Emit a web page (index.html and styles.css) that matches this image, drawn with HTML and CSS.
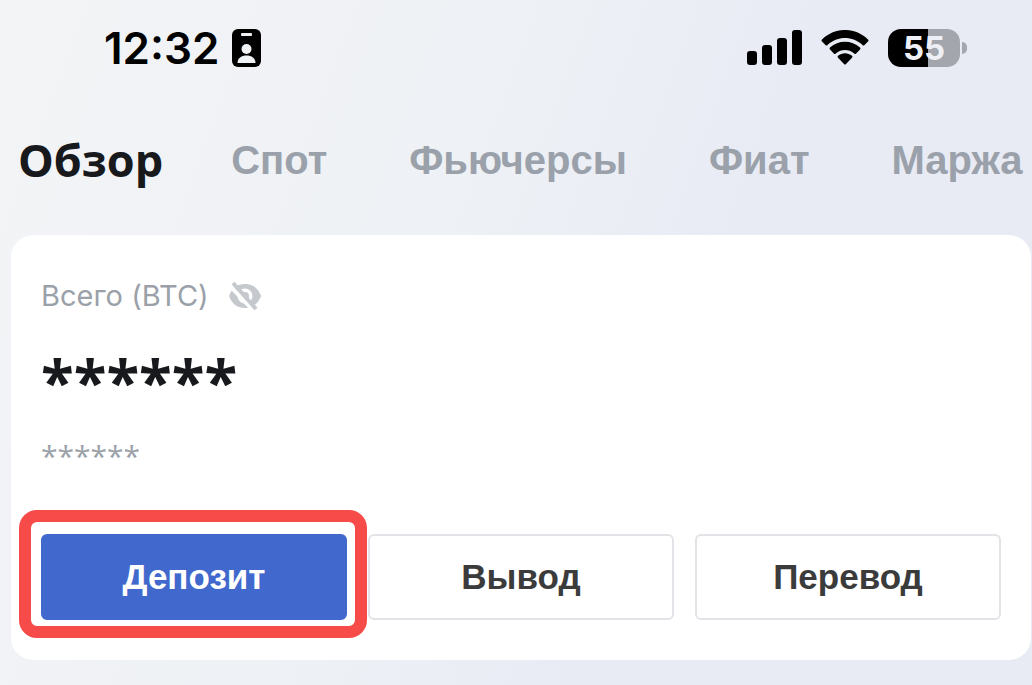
FILE: index.html
```
<!DOCTYPE html>
<html lang="ru">
<head>
  <meta charset="UTF-8">
  <meta name="viewport" content="width=device-width, initial-scale=1.0">
  <title>Обзор</title>
  <link rel="stylesheet" href="styles.css">
</head>
<body>
  <header class="status-bar">
    <div class="status-left">
      <span class="clock">12:32</span>
      <svg class="badge-icon" width="29" height="38" viewBox="0 0 29 38">
        <rect width="29" height="38" rx="6" fill="#000"/>
        <rect x="9" y="4" width="11" height="3" rx="1" fill="#eff2f5"/>
        <circle cx="14.5" cy="20" r="5" fill="#eff2f5"/>
        <path d="M5.500 34c0-5 4-7.500 9-7.500s9 2.500 9 7.500z" fill="#eff2f5"/>
      </svg>
    </div>
    <div class="status-right">
      <svg width="55" height="36" viewBox="0 0 55 36">
        <rect x="0" y="21" width="10" height="14" rx="3"/>
        <rect x="15" y="15" width="10" height="20" rx="3"/>
        <rect x="30" y="8" width="10" height="27" rx="3"/>
        <rect x="45" y="0" width="10" height="35" rx="3"/>
      </svg>
      <svg width="48" height="36" viewBox="0 0 48 36">
        <path d="M1 9.500C14-3.200 34-3.200 47 9.500q1 1 0 2L43.500 15q-1 1-2 0C31.500 5.800 16.500 5.800 6.500 15q-1 1-2 0L1 11.500q-1-1 0-2z"/>
        <path d="M9 17.600c8.400-7.900 21.600-7.900 30 0q1 1 0 2L35.200 23.400q-1 1-2 0c-5.300-4.600-13.100-4.600-18.400 0q-1 1-2 0L9 19.600q-1-1 0-2z"/>
        <path d="M17 25.800c4-3.500 10-3.500 14 0q1 1 0 2L25 34q-1 1-2 0L17 27.800q-1-1 0-2z"/>
      </svg>
      <div class="battery">
        <span class="battery-level">55</span>
        <span class="battery-tip"></span>
      </div>
    </div>
  </header>

  <nav class="tabs">
    <a class="tab active" href="#overview">Обзор</a>
    <a class="tab" href="#spot">Спот</a>
    <a class="tab" href="#futures">Фьючерсы</a>
    <a class="tab" href="#fiat">Фиат</a>
    <a class="tab" href="#margin">Маржа</a>
  </nav>

  <main class="card">
    <div class="total">
      <span>Всего (BTC)</span>
      <button class="toggle" type="button" aria-label="Показать баланс">
        <svg width="32" height="30" viewBox="0 0 32 30">
          <path d="M0 15C3 6.500 9 3 16 3s13 3.500 16 12C29 23.500 23 27 16 27S3 23.500 0 15z" fill="#c5c9ce"/>
          <circle cx="16" cy="15" r="7.500" fill="#fff"/>
          <circle cx="16" cy="15" r="4" fill="#c5c9ce"/>
          <path d="M1 5L24 29" stroke="#fff" stroke-width="4"/>
          <path d="M4 2L27 28" stroke="#c5c9ce" stroke-width="4"/>
        </svg>
      </button>
    </div>
    <div class="balance">******</div>
    <div class="balance-fiat">******</div>
    <div class="actions">
      <div class="action highlighted">
        <button class="btn primary" type="button">Депозит</button>
      </div>
      <div class="action">
        <button class="btn" type="button">Вывод</button>
      </div>
      <div class="action">
        <button class="btn" type="button">Перевод</button>
      </div>
    </div>
  </main>
</body>
</html>
```
FILE: styles.css
```
* {
  box-sizing: border-box;
}

body {
  margin: 0;
  min-height: 100vh;
  font-family: "Liberation Sans", Arial, sans-serif;
  background: linear-gradient(110deg, #f3f4f6 0%, #eef1f5 40%, #e8ebf4 65%, #e8ebf4 100%);
  overflow-x: hidden;
}

.status-bar {
  display: flex;
  justify-content: space-between;
  align-items: center;
  height: 96px;
  padding: 0 65px 0 104px;
}

.status-left {
  display: flex;
  align-items: center;
  gap: 13px;
}

.clock {
  font-family: Inter, sans-serif;
  font-size: 44px;
  font-weight: 600;
}

.status-right {
  display: flex;
  align-items: center;
  gap: 19px;
}

.battery {
  position: relative;
  width: 72px;
  height: 38px;
  margin-right: 7px;
  border-radius: 13px;
  background: linear-gradient(90deg, #000 55%, #a3a6ad 55%);
  text-align: center;
}

.battery-level {
  color: #eef0f6;
  font-family: Inter, sans-serif;
  font-size: 33px;
  font-weight: 700;
  line-height: 38px;
}

.battery-tip {
  position: absolute;
  top: 13px;
  right: -7px;
  width: 5px;
  height: 12px;
  border-radius: 0 6px 6px 0;
  background: #a3a6ad;
}

.tabs {
  display: flex;
  align-items: flex-start;
  gap: 82px;
  height: 139px;
  margin-right: 8px;
  padding: 36px 0 0 18px;
  overflow: hidden;
}

.tab {
  color: #9aa1aa;
  font-size: 40px;
  font-weight: 700;
  line-height: 56px;
  text-decoration: none;
}

.tab.active {
  margin-right: -14px;
  color: #17191c;
  font-family: "Open Sans", sans-serif;
  font-size: 45px;
}

.card {
  margin: 0 1px 25px 11px;
  padding: 41px 30px 40px;
  border-radius: 22px;
  background: #fff;
}

.total {
  display: flex;
  align-items: center;
  gap: 20px;
  color: #9aa1a8;
  font-family: Inter, sans-serif;
  font-size: 29px;
  line-height: 40px;
}

.toggle {
  display: flex;
  padding: 0;
  border: none;
  background: none;
  cursor: pointer;
}

.balance,
.balance-fiat {
  font-family: "Open Sans", sans-serif;
}

.balance {
  margin-top: 33px;
  color: #17191c;
  font-size: 60px;
  font-weight: 700;
  line-height: 64px;
}

.balance-fiat {
  margin-top: 23px;
  color: #9aa1a8;
  font-size: 30px;
  line-height: 40px;
}

.actions {
  display: grid;
  grid-template-columns: repeat(3, 1fr);
  gap: 21px;
  margin-top: 58px;
}

.action {
  position: relative;
}

/* red frame around the deposit button */
.highlighted::after {
  content: "";
  position: absolute;
  z-index: 1;
  inset: -24px -20px -18px -22px;
  border: 12px solid #f64b48;
  border-radius: 18px;
  pointer-events: none;
}

.btn {
  width: 100%;
  height: 86px;
  padding: 0;
  border: 2px solid #e2e3e7;
  border-radius: 6px;
  background: #fff;
  color: #3b3b3c;
  font-family: inherit;
  font-size: 35px;
  font-weight: 700;
  cursor: pointer;
}

.btn.primary {
  border-color: #4168cd;
  background: #4168cd;
  color: #fff;
}
```
